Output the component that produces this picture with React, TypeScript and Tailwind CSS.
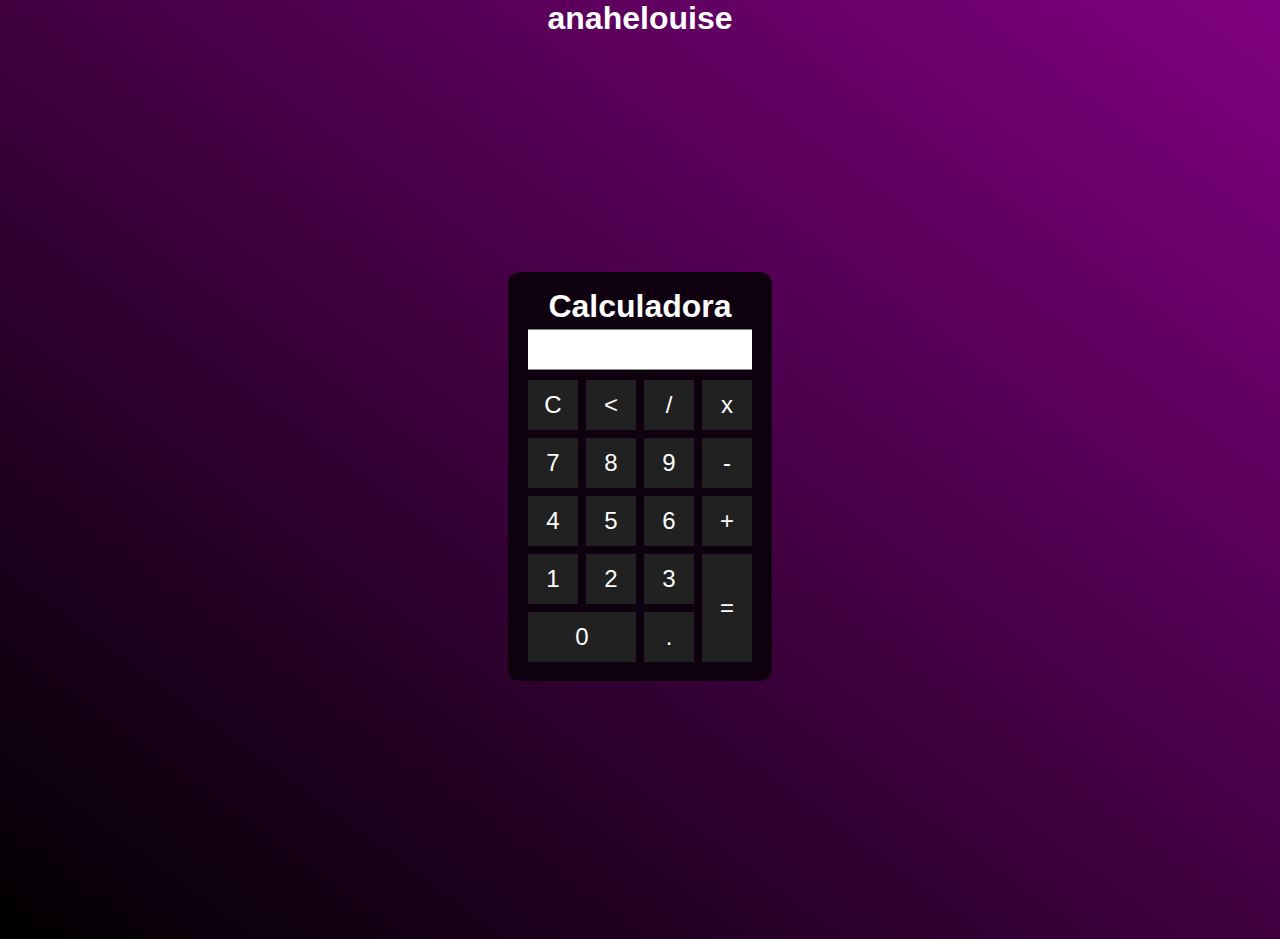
const keys: { label: string; cls?: string }[] = [
  { label: "C" },
  { label: "<" },
  { label: "/" },
  { label: "x" },
  { label: "7" },
  { label: "8" },
  { label: "9" },
  { label: "-" },
  { label: "4" },
  { label: "5" },
  { label: "6" },
  { label: "+" },
  { label: "1" },
  { label: "2" },
  { label: "3" },
  { label: "=", cls: "row-span-2" },
  { label: "0", cls: "col-span-2" },
  { label: "." },
];

export default function App() {
  return (
    <div
      className="flex min-h-screen flex-col items-center bg-[linear-gradient(to_top_right,#000000,#800080)] text-white"
      style={{ fontFamily: '"Liberation Sans", Arial, sans-serif' }}
    >
      <h1 className="text-[32px] font-bold leading-[normal]">anahelouise</h1>

      <div className="mt-[235px] w-[264px] rounded-xl bg-[#0e000e] px-5 pb-[19px] pt-4">
        <h2 className="text-center text-[32px] font-bold leading-[normal]">Calculadora</h2>
        <div className="mt-[4px] h-[41px] border-y border-[#8a8a8a] bg-white" />
        <div className="mt-[10px] grid grid-cols-[repeat(4,50px)] grid-rows-[repeat(5,50px)] gap-2">
          {keys.map((k) => (
            <button
              key={k.label}
              className={`flex items-center justify-center bg-[#212121] text-[24px] text-white ${k.cls ?? ""}`}
            >
              {k.label}
            </button>
          ))}
        </div>
      </div>
    </div>
  );
}
